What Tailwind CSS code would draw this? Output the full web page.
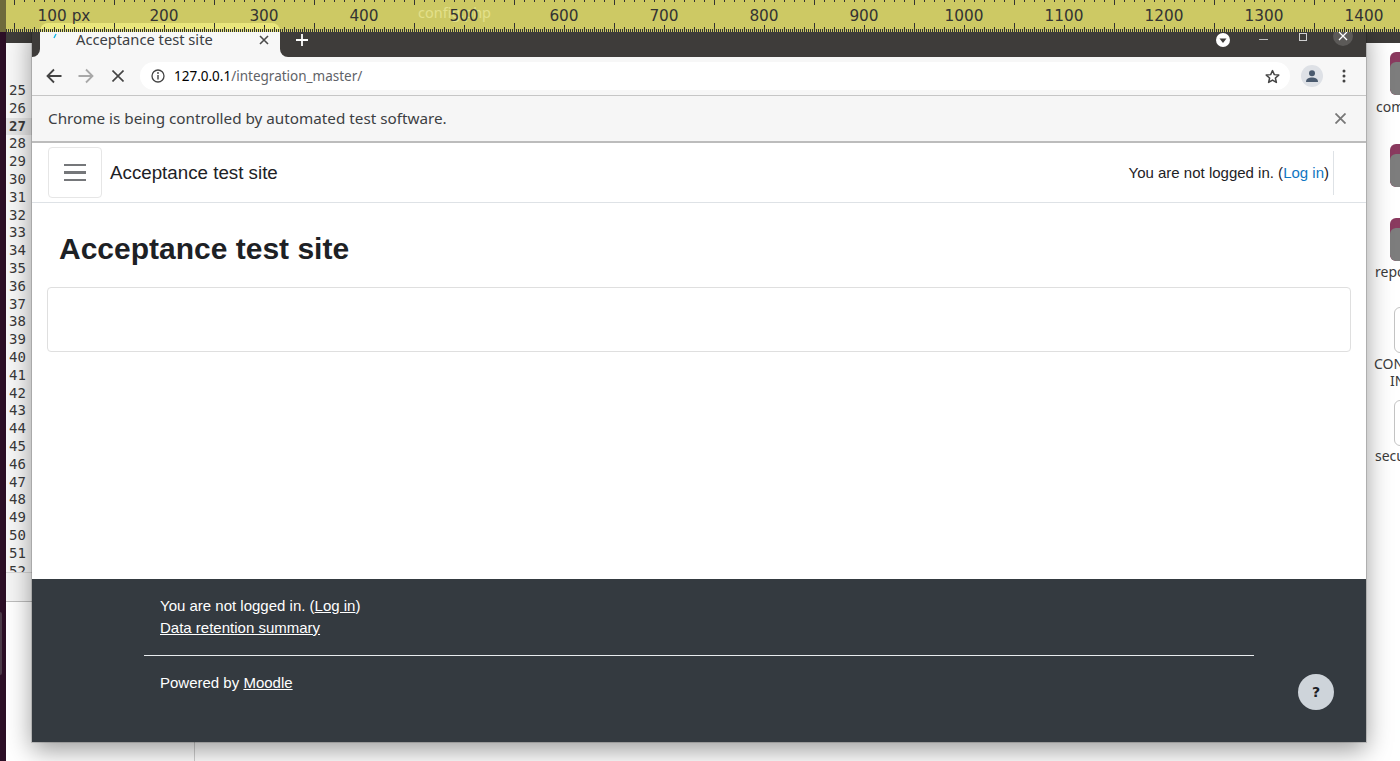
<!DOCTYPE html>
<html lang="en">
<head>
<meta charset="UTF-8">
<title>Acceptance test site</title>
<script src="https://cdn.jsdelivr.net/npm/@tailwindcss/browser@4"></script>
</head>
<body class="bg-white font-['Liberation_Sans',sans-serif] overflow-hidden">
<div class="relative w-[1400px] h-[761px] overflow-hidden bg-white">

  <!-- desktop strip -->
  <div class="absolute left-0 top-0 w-[6px] h-full bg-[#2c0f26]">
    <div class="absolute left-0 top-[612px] w-[2px] h-[63px] rounded-r bg-[#4b3a48]"></div>
  </div>

  <!-- editor window behind -->
  <div class="absolute left-[6px] top-[32px] w-[300px] h-[729px] flex flex-col bg-white">
    <div class="h-[11px] bg-[#3e3c3a]"></div>
    <div class="h-[37px] bg-[#f8f8f8]"></div>
    <div class="h-[492px] pt-[2px] overflow-hidden bg-[#f7f7f7] font-['DejaVu_Sans_Mono',monospace] text-[14px] leading-[17.8px] text-[#3a3a3a] pl-[3px]">
      <div>25</div><div>26</div><div class="font-bold bg-[#e4e4e4] -ml-[3px] pl-[3px]">27</div><div>28</div><div>29</div><div>30</div><div>31</div><div>32</div><div>33</div><div>34</div><div>35</div><div>36</div><div>37</div><div>38</div><div>39</div><div>40</div><div>41</div><div>42</div><div>43</div><div>44</div><div>45</div><div>46</div><div>47</div><div>48</div><div>49</div><div>50</div><div>51</div><div>52</div>
    </div>
    <div class="h-[29px] bg-[#f5f5f5] border-t border-[#d8d8d8]"></div>
    <div class="flex-1 flex border-t border-[#bdbdbd]">
      <div class="w-[189px] border-r border-[#d0d0d0]"></div>
    </div>
  </div>

  <!-- desktop icons on the right -->
  <div class="absolute left-[1390px] top-[52px] w-[30px] h-[43px] rounded-md bg-[#8a3a5f] overflow-hidden"><div class="mt-[10px] h-[33px] rounded-md bg-[#7d7d7d]"></div></div>
  <div class="absolute left-[1376px] top-[98px] text-[14px] leading-[18px] text-[#3c3c3c] font-['Noto_Sans',sans-serif]">com</div>
  <div class="absolute left-[1390px] top-[144px] w-[30px] h-[43px] rounded-md bg-[#8a3a5f] overflow-hidden"><div class="mt-[10px] h-[33px] rounded-md bg-[#7d7d7d]"></div></div>
  <div class="absolute left-[1390px] top-[218px] w-[30px] h-[43px] rounded-md bg-[#8a3a5f] overflow-hidden"><div class="mt-[10px] h-[33px] rounded-md bg-[#7d7d7d]"></div></div>
  <div class="absolute left-[1375px] top-[263px] text-[14px] leading-[18px] text-[#3c3c3c] font-['Noto_Sans',sans-serif]">repo</div>
  <div class="absolute left-[1394px] top-[307px] w-[20px] h-[46px] rounded-md bg-white border border-[#c4c4c4]"></div>
  <div class="absolute left-[1374px] top-[355px] text-[14px] leading-[17px] text-[#3c3c3c] font-['Noto_Sans',sans-serif]">CON</div>
  <div class="absolute left-[1390px] top-[372px] text-[14px] leading-[17px] text-[#3c3c3c] font-['Noto_Sans',sans-serif]">IN</div>
  <div class="absolute left-[1394px] top-[400px] w-[20px] h-[46px] rounded-md bg-white border border-[#c4c4c4]"></div>
  <div class="absolute left-[1375px] top-[447px] text-[14px] leading-[17px] text-[#3c3c3c] font-['Noto_Sans',sans-serif]">secu</div>

  <!-- strip of dark above the right icons -->
  <div class="absolute left-[1366px] top-[32px] w-[34px] h-[11px] bg-[#3e3c3a]"></div>

  <!-- browser window -->
  <div class="absolute left-[32px] top-[23px] w-[1334px] h-[719px] flex flex-col bg-white shadow-[0_0_0_1px_rgba(0,0,0,0.15),0_8px_24px_rgba(0,0,0,0.4)]">
    <!-- title bar -->
    <div class="relative h-[34px] bg-[#3e3c3a] flex items-end shrink-0">
      <div class="absolute left-0 bottom-0 w-[8px] h-[8px] bg-[#f7f7f7]"><div class="w-full h-full bg-[#3e3c3a] rounded-br-lg"></div></div>
      <div class="absolute left-[248px] bottom-0 w-[8px] h-[8px] bg-[#f7f7f7]"><div class="w-full h-full bg-[#3e3c3a] rounded-bl-lg"></div></div>
      <div class="relative ml-[8px] w-[240px] h-[34px] bg-[#f7f7f7] rounded-t-lg flex items-end">
        <span class="ml-[36px] mb-[9px] text-[14.7px] leading-[18px] text-[#3c4043] font-['Noto_Sans',sans-serif]">Acceptance test site</span>
        <svg class="absolute left-[12px] top-[10px]" width="6" height="6" viewBox="0 0 6 6"><path d="M2 5 L4 1" stroke="#12b5e5" stroke-width="1.4"/></svg>
        <svg class="absolute left-[219px] top-[12px]" width="10" height="10" viewBox="0 0 10 10"><path d="M1 1 L9 9 M9 1 L1 9" stroke="#4a4a4a" stroke-width="1.6"/></svg>
      </div>
      <svg class="absolute left-[264px] top-[11px]" width="12" height="12" viewBox="0 0 12 12"><path d="M6 0 V12 M0 6 H12" stroke="#fff" stroke-width="1.8"/></svg>
      <svg class="absolute left-[1184px] top-[10px]" width="14" height="14" viewBox="0 0 14 14"><circle cx="7" cy="7" r="7" fill="#fff"/><path d="M3.5 5.5 H10.5 L7 10 Z" fill="#3e3c3a"/></svg>
      <div class="absolute left-[1227px] top-[16px] w-[9px] h-px bg-[#bdbdbd]"></div>
      <div class="absolute left-[1267px] top-[10px] w-[8px] h-[8px] border border-[#d0d0d0]"></div>
      <div class="absolute left-[1301px] top-[3px] w-[20px] h-[20px] rounded-full bg-[#5c5a58]"></div>
      <svg class="absolute left-[1306px] top-[8px]" width="10" height="10" viewBox="0 0 10 10"><path d="M1 1 L9 9 M9 1 L1 9" stroke="#fff" stroke-width="1.3"/></svg>
    </div>
    <!-- toolbar -->
    <div class="h-[38px] bg-[#f7f7f7] border-b border-[#c6c6c6] flex items-center shrink-0 box-content">
      <svg class="ml-[14px]" width="16" height="16" viewBox="0 0 16 16"><path d="M15.5 8 H2 M8 1.5 L1.5 8 L8 14.5" fill="none" stroke="#444" stroke-width="1.8"/></svg>
      <svg class="ml-[16px]" width="16" height="16" viewBox="0 0 16 16"><path d="M0.5 8 H14 M8 1.5 L14.5 8 L8 14.5" fill="none" stroke="#a8a8a8" stroke-width="1.8"/></svg>
      <svg class="ml-[18px]" width="12" height="12" viewBox="0 0 12 12"><path d="M0.5 0.5 L11.5 11.5 M11.5 0.5 L0.5 11.5" stroke="#444" stroke-width="1.6"/></svg>
      <div class="ml-[16px] w-[1150px] h-[28px] rounded-full bg-white flex items-center relative">
        <svg class="ml-[11px]" width="14" height="14" viewBox="0 0 14 14"><circle cx="7" cy="7" r="6" fill="none" stroke="#444" stroke-width="1.3"/><path d="M7 6 V10.5" stroke="#444" stroke-width="1.4"/><circle cx="7" cy="4" r="0.9" fill="#444"/></svg>
        <span class="ml-[9px] text-[13.5px] leading-[18px] font-['Noto_Sans',sans-serif] text-black">127.0.0.1<span class="text-[#5f6368]">/integration_master/</span></span>
        <svg class="absolute left-[1125px] top-[7px]" width="15" height="15" viewBox="0 0 24 24"><path d="M12 2.5 L14.9 9 L22 9.7 L16.6 14.4 L18.2 21.4 L12 17.7 L5.8 21.4 L7.4 14.4 L2 9.7 L9.1 9 Z" fill="none" stroke="#444" stroke-width="2.4" stroke-linejoin="round"/></svg>
      </div>
      <div class="ml-[11px] w-[22px] h-[22px] rounded-full bg-[#dee1e6] flex items-center justify-center">
        <svg width="14" height="14" viewBox="0 0 14 14"><circle cx="7" cy="4.2" r="3" fill="#4a5a6e"/><path d="M1 13 C1 9.5 4 8.5 7 8.5 C10 8.5 13 9.5 13 13 Z" fill="#4a5a6e"/></svg>
      </div>
      <svg class="ml-[19px]" width="4" height="14" viewBox="0 0 4 14"><circle cx="2" cy="2" r="1.5" fill="#444"/><circle cx="2" cy="7" r="1.5" fill="#444"/><circle cx="2" cy="12" r="1.5" fill="#444"/></svg>
    </div>
    <!-- automation info bar -->
    <div class="h-[45px] bg-[#f6f6f6] border-b-2 border-[#bcbcbc] flex items-center justify-between shrink-0 box-content pl-[16px] pr-[20px]">
      <span class="text-[15.25px] text-[#3c4043] font-['Noto_Sans',sans-serif]">Chrome is being controlled by automated test software.</span>
      <svg width="11" height="11" viewBox="0 0 11 11"><path d="M0.5 0.5 L10.5 10.5 M10.5 0.5 L0.5 10.5" stroke="#777" stroke-width="1.8"/></svg>
    </div>
    <!-- navbar -->
    <div class="h-[59px] border-b border-[#dee2e6] flex items-center shrink-0 box-content pl-[16px] pr-[32px]">
      <button class="w-[54px] h-[51px] rounded border border-[#e6e6e6] flex flex-col items-center justify-center gap-[5px]">
        <span class="w-[22px] h-[2.5px] bg-[#75777a]"></span>
        <span class="w-[22px] h-[2.5px] bg-[#75777a]"></span>
        <span class="w-[22px] h-[2.5px] bg-[#75777a]"></span>
      </button>
      <span class="ml-[8px] mt-[1px] text-[18.75px] text-[#1d2125]">Acceptance test site</span>
      <span class="ml-auto mt-[1px] text-[15px] text-[#1d2125]">You are not logged in. (<a class="text-[#0f76c2]">Log in</a>)</span>
      <div class="ml-[4px] w-px h-[44px] bg-[#dee2e6]"></div>
    </div>
    <!-- page -->
    <div class="flex-1 bg-white px-[15px]">
      <h1 class="ml-[12px] mt-[27px] text-[30px] leading-[38px] font-bold text-[#1d2125]">Acceptance test site</h1>
      <div class="mt-[19px] h-[65px] mr-0 rounded border border-[#dfdfdf]"></div>
    </div>
    <!-- footer -->
    <div class="relative h-[163px] bg-[#343a40] text-white text-[15px] leading-[22.5px] shrink-0">
      <div class="pl-[128px] pt-[15.5px]">
        <div>You are not logged in. (<a class="underline">Log in</a>)</div>
        <div><a class="underline">Data retention summary</a></div>
      </div>
      <div class="ml-[112px] mt-[15.5px] w-[1110px] h-px bg-[#e9ecef]"></div>
      <div class="pl-[128px] mt-[16px]">Powered by <a class="underline">Moodle</a></div>
      <div class="absolute left-[1266px] top-[95px] w-[36px] h-[36px] rounded-full bg-[#ced4da] text-[#1d2125] flex items-center justify-center font-['DejaVu_Sans',sans-serif] font-bold text-[14px]">?</div>
    </div>
  </div>

  <!-- ruler on top -->
  <div class="absolute left-0 top-0 w-[1400px] h-[32px] bg-[#cdc964] overflow-hidden">
    <div class="absolute left-0 top-0 w-[6px] h-full bg-[#6e6a3c]"></div>
    <div class="absolute left-[40px] top-[23px] w-[240px] h-[9px] bg-[#e9e67c] rounded-t-lg"></div>
    <svg id="ticks" class="absolute left-0 top-0" width="1400" height="32"></svg>
    <div class="absolute left-[418px] top-[3px] text-[14.5px] leading-[18px] text-[#e3e08a] font-['Noto_Sans',sans-serif]">config.php</div>
    <div class="relative flex ml-[14px] font-['DejaVu_Sans',sans-serif] text-[15.3px] leading-[18px] pt-[7px] text-[#333333]">
      <div class="w-[100px] shrink-0 text-center">100 px</div>
      <div class="w-[100px] shrink-0 text-center">200</div>
      <div class="w-[100px] shrink-0 text-center">300</div>
      <div class="w-[100px] shrink-0 text-center">400</div>
      <div class="w-[100px] shrink-0 text-center">500</div>
      <div class="w-[100px] shrink-0 text-center">600</div>
      <div class="w-[100px] shrink-0 text-center">700</div>
      <div class="w-[100px] shrink-0 text-center">800</div>
      <div class="w-[100px] shrink-0 text-center">900</div>
      <div class="w-[100px] shrink-0 text-center">1000</div>
      <div class="w-[100px] shrink-0 text-center">1100</div>
      <div class="w-[100px] shrink-0 text-center">1200</div>
      <div class="w-[100px] shrink-0 text-center">1300</div>
      <div class="w-[100px] shrink-0 text-center">1400</div>
    </div>
  </div>
</div>
<script>
  // ruler ticks
  var d = '';
  for (var x = 14; x < 1400; x += 2) {
    var n = x - 14;
    var h = n % 100 === 0 ? 9 : n % 50 === 0 ? 7 : n % 10 === 0 ? 5 : 3;
    d += 'M' + (x + 0.5) + ' 32V' + (32 - h);
    if (n % 10 === 0) d += 'M' + (x + 0.5) + ' 0V' + (n % 100 === 0 ? 5 : 2);
  }
  for (var x = 12; x > 5; x -= 2) d += 'M' + (x + 0.5) + ' 32V29';
  document.getElementById('ticks').innerHTML = '<path d="' + d + '" stroke="#333" stroke-width="1"/>';
</script>
</body>
</html>
